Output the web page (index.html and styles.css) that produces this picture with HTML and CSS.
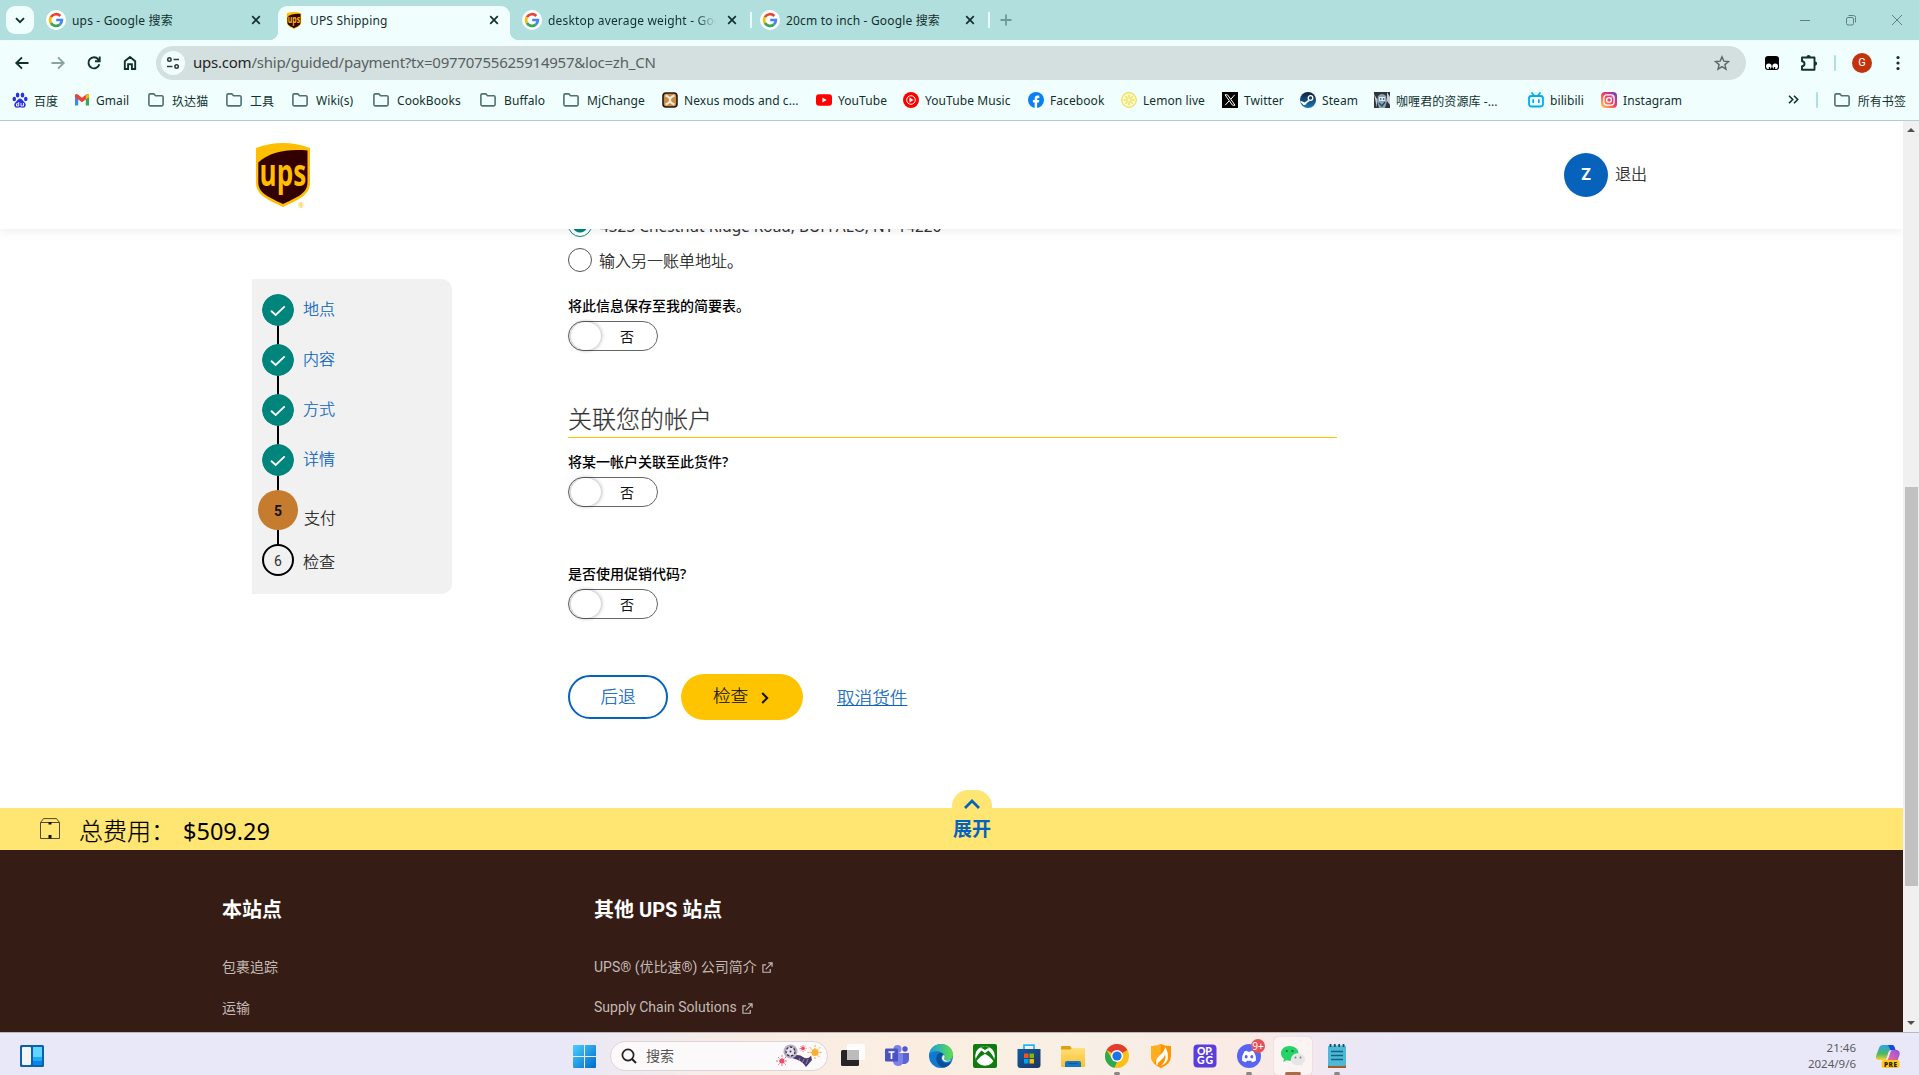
FILE: index.html
```html
<!DOCTYPE html>
<html lang="zh-CN">
<head>
<meta charset="utf-8">
<title>UPS Shipping</title>
<link rel="stylesheet" href="styles.css">
</head>
<body>
<svg class="defs" width="0" height="0" aria-hidden="true">
  <defs>
    <symbol id="google" viewBox="0 0 20 20">
      <circle cx="10" cy="10" r="10" fill="#fff"/>
      <g fill="none" stroke-width="2.7">
        <path d="M14.3 6A5.9 5.9 0 0 0 4.9 7.2" stroke="#ea4335"/>
        <path d="M4.9 7.2a5.9 5.9 0 0 0 0 5.8" stroke="#fbbc05"/>
        <path d="M4.9 13a5.9 5.9 0 0 0 9 1.4" stroke="#34a853"/>
        <path d="M13.9 14.4A5.9 5.9 0 0 0 15.9 10H10.2" stroke="#4285f4"/>
      </g>
    </symbol>
    <symbol id="close" viewBox="0 0 10 10"><path d="M1.2 1.2l7.6 7.6M8.8 1.2L1.2 8.8" stroke="currentColor" stroke-width="1.7"/></symbol>
    <symbol id="folder" viewBox="0 0 16 14"><path d="M.9 11.6V2.2q0-1.3 1.3-1.3h3.6l1.8 1.8h6.2q1.3 0 1.3 1.3v7.6q0 1.3-1.3 1.3H2.2q-1.3 0-1.3-1.3z" fill="none" stroke="#52706e" stroke-width="1.6"/></symbol>
    <symbol id="ups" viewBox="0 0 54 64">
      <path d="M0 5Q27-5 54 5v34c0 12-8 16-27 25C8 55 0 51 0 39z" fill="#ffbe00"/>
      <path d="M2.300 19.500C13 9 31 5.500 51.500 7.400V39c0 10-7 14-24.500 22C9.500 53 2.300 49 2.300 39z" fill="#330000"/>
      <text x="3.600" y="43" font-family="Open Sans, sans-serif" font-weight="700" font-size="38" textLength="46.500" lengthAdjust="spacingAndGlyphs" fill="#ffbe00">ups</text>
    </symbol>
    <symbol id="check" viewBox="0 0 32 32"><circle cx="16" cy="16" r="16" fill="#00857d"/><path d="M9 16.700l4.700 4.300 9-8.600" fill="none" stroke="#fff" stroke-width="1.900"/></symbol>
    <symbol id="external" viewBox="0 0 12 12"><path d="M4.500 3.200H1v8h8V7.500M4 8l6.700-6.700M6.800 1H11v4.200" fill="none" stroke="currentColor" stroke-width="1.300"/></symbol>
    <linearGradient id="insta" x1="0" y1="1" x2="1" y2="0"><stop offset="0" stop-color="#fd5"/><stop offset=".5" stop-color="#ff3a58"/><stop offset="1" stop-color="#6a38dd"/></linearGradient>
    <linearGradient id="win" x1="0" y1="0" x2="1" y2="1"><stop offset="0" stop-color="#4ad0fb"/><stop offset="1" stop-color="#0069cc"/></linearGradient>
    <linearGradient id="edge" x1="0" y1="0" x2="1" y2="0"><stop offset="0" stop-color="#1a9de0"/><stop offset="1" stop-color="#5fe04d"/></linearGradient>
    <linearGradient id="steam" x1="0" y1="0" x2="0" y2="1"><stop offset="0" stop-color="#111d3e"/><stop offset="1" stop-color="#1a78b5"/></linearGradient>
    <linearGradient id="store" x1="0" y1="0" x2="1" y2="1"><stop offset="0" stop-color="#0f5ba6"/><stop offset="1" stop-color="#20345c"/></linearGradient>
    <linearGradient id="files" x1="0" y1="0" x2="0" y2="1"><stop offset="0" stop-color="#ffe07a"/><stop offset="1" stop-color="#fbbf2b"/></linearGradient>
    <linearGradient id="cop" x1="0" y1="0" x2="0" y2="1"><stop offset="0" stop-color="#2aa2f5"/><stop offset=".6" stop-color="#52b85c"/><stop offset="1" stop-color="#f7d432"/></linearGradient>
    <linearGradient id="cop2" x1="1" y1="0" x2="0" y2="1"><stop offset="0" stop-color="#8c52f4"/><stop offset="1" stop-color="#ff6b7a"/></linearGradient>
  </defs>
</svg>

<div class="tabs">
  <button class="tab-search"><svg width="10" height="7" viewBox="0 0 10 7"><path d="M1 1.200l4 4 4-4" fill="none" stroke="#12302e" stroke-width="1.900"/></svg></button>
  <div class="tab"><svg class="fav"><use href="#google"/></svg><span class="title">ups - Google 搜索</span><svg class="x"><use href="#close"/></svg></div>
  <div class="tab active"><svg class="fav shield"><use href="#ups"/></svg><span class="title">UPS Shipping</span><svg class="x"><use href="#close"/></svg></div>
  <div class="tab divided"><svg class="fav"><use href="#google"/></svg><span class="title fade">desktop average weight - Goo</span><svg class="x"><use href="#close"/></svg></div>
  <div class="tab divided"><svg class="fav"><use href="#google"/></svg><span class="title">20cm to inch - Google 搜索</span><svg class="x"><use href="#close"/></svg></div>
  <svg class="plus" width="12" height="12" viewBox="0 0 12 12"><path d="M6 .5v11M.5 6h11" stroke="#6a9b99" stroke-width="1.800"/></svg>
  <div class="window-buttons">
    <svg width="12" height="12" viewBox="0 0 12 12"><path d="M1 6.500h10"/></svg>
    <svg width="12" height="12" viewBox="0 0 12 12"><path d="M3.500 1.500h5q2 0 2 2v5M1.500 5q0-1.500 1.500-1.500h4q1.500 0 1.500 1.500v4.500q0 1.500-1.500 1.500H3q-1.500 0-1.500-1.500z"/></svg>
    <svg width="12" height="12" viewBox="0 0 12 12"><path d="M1 1l10 10M11 1L1 11"/></svg>
  </div>
</div>

<div class="toolbar">
  <div class="nav">
    <svg width="16" height="16" viewBox="0 0 16 16"><path d="M14.500 8H3M8 2.300L2.300 8 8 13.700"/></svg>
    <svg class="off" width="16" height="16" viewBox="0 0 16 16"><path d="M1.500 8H13M8 2.300L13.700 8 8 13.700"/></svg>
    <svg width="16" height="16" viewBox="0 0 16 16"><path d="M13.300 9.200A5.500 5.500 0 1 1 12.200 4.300L13.500 5.800M13.700 1.500v4.700H9"/></svg>
    <svg width="16" height="16" viewBox="0 0 16 16"><path d="M2.800 14V6.300L8 2l5.200 4.300V14H9.900V9.300H6.100V14z"/></svg>
  </div>
  <div class="omnibox">
    <span class="site"><svg width="14" height="14" viewBox="0 0 14 14"><g fill="none" stroke="#333b3a" stroke-width="1.600"><circle cx="3.400" cy="3.500" r="1.700"/><path d="M7.500 3.500H13M1 10.500h5.500"/><circle cx="10.600" cy="10.500" r="1.700"/></g></svg></span>
    <span class="url"><b>ups.com</b>/ship/guided/payment?tx=09770755625914957&amp;loc=zh_CN</span>
    <svg width="16" height="16" viewBox="0 0 16 16"><path d="M8 1.800l1.800 4.300 4.700.4-3.600 3.100 1.100 4.600L8 11.700l-4 2.500 1.100-4.600L1.500 6.500l4.700-.4z" fill="none" stroke="#5c6665" stroke-width="1.400"/></svg>
  </div>
  <div class="actions">
    <svg width="16" height="16" viewBox="0 0 16 16"><rect x="1" y="1" width="14" height="14" rx="3" fill="#000"/><circle cx="4.800" cy="11.300" r="2.800" fill="#fff"/><circle cx="11.200" cy="11.300" r="2.800" fill="#fff"/><path d="M5.500 12v2M10.500 12v2" stroke="#000" stroke-width="1.300"/></svg>
    <svg width="18" height="18" viewBox="0 0 18 18"><path d="M2 3.500h12.500v12.300H2v-3.700q2.500 0 2.500-2.400T2 7.200z" fill="none" stroke="#12302e" stroke-width="1.900" stroke-linejoin="round"/><path d="M6.600 3a2 2 0 0 1 4 0zM15 7.500a2.100 2.100 0 0 1 0 4.200z" fill="#12302e"/></svg>
    <i class="sep"></i>
    <span class="avatar">G</span>
    <svg width="4" height="16" viewBox="0 0 4 16" fill="#12302e"><circle cx="2" cy="2.500" r="1.600"/><circle cx="2" cy="8" r="1.600"/><circle cx="2" cy="13.500" r="1.600"/></svg>
  </div>
</div>

<div class="bookmarks">
  <a><svg viewBox="0 0 16 16" fill="#2932e1"><ellipse cx="5.600" cy="3" rx="1.800" ry="2.500"/><ellipse cx="10.500" cy="3" rx="1.800" ry="2.500"/><ellipse cx="2.300" cy="7" rx="1.800" ry="2.300"/><ellipse cx="13.800" cy="7" rx="1.800" ry="2.300"/><path d="M8 6.500c2 0 3 2.600 4.600 4 2 1.800 1.200 5.200-1.500 5.200-1.200 0-2-.4-3.100-.4s-1.900.4-3.100.4c-2.700 0-3.500-3.400-1.500-5.200C5 9.100 6 6.500 8 6.500z"/><path d="M6.700 10v4H4.500v-2.200h2M9 11v3h2.500v-3" fill="none" stroke="#fff" stroke-width=".9"/></svg><span>百度</span></a>
  <a><svg viewBox="0 0 16 16"><path d="M1 13.500V4.500L4.200 6v7.500z" fill="#4285f4"/><path d="M11.800 13.500V6L15 4.500v9z" fill="#34a853"/><path d="M.9 5V3.500Q1.500 1.300 3.900 2.600L8 5.800l4.100-3.200q2.400-1.300 3 .9V5L8 10.200z" fill="#ea4335"/><path d="M11.800 7.400V3l1-.6q2.300-.6 2.300 1.800V5z" fill="#fbbc04"/></svg><span>Gmail</span></a>
  <a class="dir"><svg><use href="#folder"/></svg><span>玖达猫</span></a>
  <a class="dir"><svg><use href="#folder"/></svg><span>工具</span></a>
  <a class="dir"><svg><use href="#folder"/></svg><span>Wiki(s)</span></a>
  <a class="dir"><svg><use href="#folder"/></svg><span>CookBooks</span></a>
  <a class="dir"><svg><use href="#folder"/></svg><span>Buffalo</span></a>
  <a class="dir"><svg><use href="#folder"/></svg><span>MjChange</span></a>
  <a><svg viewBox="0 0 16 16"><rect x="1" y="1" width="14" height="14" rx="3" fill="#c98b48" stroke="#221a12" stroke-width="1.600"/><path d="M3.500 3.500Q8 5 8 8t4.500 4.500M12.500 3.500Q8 5 8 8t-4.500 4.500" stroke="#f7ead6" stroke-width="2" fill="none"/></svg><span>Nexus mods and c...</span></a>
  <a><svg viewBox="0 0 16 16"><rect y="2.300" width="16" height="11.400" rx="3" fill="#f00"/><path d="M6.400 5.500v5L10.700 8z" fill="#fff"/></svg><span>YouTube</span></a>
  <a><svg viewBox="0 0 16 16"><circle cx="8" cy="8" r="8" fill="#f00"/><circle cx="8" cy="8" r="4.300" fill="none" stroke="#fff"/><path d="M6.500 5.600v4.800L10.500 8z" fill="#fff"/></svg><span>YouTube Music</span></a>
  <a><svg viewBox="0 0 16 16"><circle cx="8" cy="8" r="8" fill="#0c80f2"/><path d="M6.700 16v-5.500H4.900V8h1.800V6.500q0-3 3-3 1 0 1.600.2V6h-1q-1.200 0-1.200 1.200V8h2.200l-.4 2.500H9.100V16z" fill="#fff"/></svg><span>Facebook</span></a>
  <a><svg viewBox="0 0 16 16"><circle cx="8" cy="8" r="7.300" fill="#fffbd0" stroke="#ecdf52" stroke-width="1.200"/><path d="M8 2.500v11M2.500 8h11M4.100 4.100l7.800 7.800M11.900 4.100l-7.800 7.800" stroke="#eee060" stroke-width="1.400" stroke-dasharray="4 3"/></svg><span>Lemon live</span></a>
  <a><svg viewBox="0 0 16 16"><rect width="16" height="16" fill="#000"/><path d="M3 2.800h2.500l7.500 10.400h-2.500zM12.700 2.800L9 7.100M7 9l-3.800 4.200" fill="none" stroke="#fff" stroke-width="1"/></svg><span>Twitter</span></a>
  <a><svg viewBox="0 0 16 16"><circle cx="8" cy="8" r="8" fill="url(#steam)"/><circle cx="10.500" cy="6" r="2.300" fill="none" stroke="#fff" stroke-width="1.300"/><path d="M.4 8.800l4.400 1.800 3.600-2.900 1.200 1.200-3 2.300a2.200 2.200 0 0 1-4.200.6L.7 10.500z" fill="#fff"/></svg><span>Steam</span></a>
  <a><svg viewBox="0 0 16 16"><rect width="16" height="16" fill="#30343b"/><path d="M4 4q4-4 8 0l1 5-2 7H5L3 9z" fill="#8aa4b8"/><path d="M5 5h6v4H5z" fill="#dde6ea"/><path d="M0 2l3 5v9M13 0l3 5v8l-3-4z" fill="#c9cbd0"/><path d="M6 7h1.300M9 7h1.300M5 11l3 3 3-4" stroke="#2c4358" fill="none" stroke-width="1.300"/></svg><span>咖喱君的资源库 -...</span></a>
  <a><svg viewBox="0 0 16 16" fill="none" stroke="#00aeec" stroke-width="1.800"><rect x="1" y="4" width="14" height="10.500" rx="2.400"/><path d="M4 1l2 2.500M12 1l-2 2.500M5.200 8v2.200M10.800 8v2.200" stroke-linecap="round"/></svg><span>bilibili</span></a>
  <a><svg viewBox="0 0 16 16"><rect width="16" height="16" rx="4" fill="url(#insta)"/><g fill="none" stroke="#fff" stroke-width="1.300"><rect x="2.900" y="2.900" width="10.200" height="10.200" rx="3"/><circle cx="8" cy="8" r="2.400"/></g><circle cx="11" cy="5" r=".7" fill="#fff"/></svg><span>Instagram</span></a>
  <div class="overflow">
    <svg width="11" height="9" viewBox="0 0 11 9"><path d="M1 .8l3.700 3.700L1 8.200M6 .8l3.700 3.700L6 8.200" fill="none" stroke="#12302e" stroke-width="1.600"/></svg>
    <i class="sep"></i>
    <a class="dir"><svg><use href="#folder"/></svg><span>所有书签</span></a>
  </div>
</div>

<div class="window">
  <div class="page">
    <header>
      <div class="logo"><svg width="54" height="64"><use href="#ups"/></svg><sup>®</sup></div>
      <div class="user"><span class="initial">Z</span><span class="logout">退出</span></div>
    </header>
    <main>
      <aside>
        <ol>
          <li class="done"><svg class="dot"><use href="#check"/></svg><a>地点</a></li>
          <li class="done"><svg class="dot"><use href="#check"/></svg><a>内容</a></li>
          <li class="done"><svg class="dot"><use href="#check"/></svg><a>方式</a></li>
          <li class="done"><svg class="dot"><use href="#check"/></svg><a>详情</a></li>
          <li class="current"><span class="dot">5</span><span class="name">支付</span></li>
          <li class="next"><span class="dot">6</span><span class="name">检查</span></li>
        </ol>
      </aside>
      <form>
        <label class="radio on"><i></i><span>4323 Chestnut Ridge Road, BUFFALO, NY 14226</span></label>
        <label class="radio"><i></i><span>输入另一账单地址。</span></label>
        <div class="question save"><p>将此信息保存至我的简要表。</p><div class="toggle"><i></i><span>否</span></div></div>
        <h2>关联您的帐户</h2>
        <div class="question"><p>将某一帐户关联至此货件?</p><div class="toggle"><i></i><span>否</span></div></div>
        <div class="question promo"><p>是否使用促销代码?</p><div class="toggle"><i></i><span>否</span></div></div>
        <div class="buttons">
          <span class="back">后退</span>
          <span class="go">检查<svg width="8" height="12" viewBox="0 0 8 12"><path d="M1.200 1l5 5-5 5" fill="none" stroke="#121212" stroke-width="2"/></svg></span>
          <a>取消货件</a>
        </div>
      </form>
    </main>
    <div class="total">
      <svg width="20" height="21" viewBox="0 0 20 21"><path d="M.5 4.500h19v16H.5zM.5 4.500L3.500.6h13l3 3.900" fill="none" stroke="#54492a" stroke-width="1"/><path d="M8.500 4h3v2.500h-3zM8.500 17h3v3.500h-3z" fill="#121212"/></svg>
      <span class="cost">总费用：</span><span class="amount">$509.29</span>
      <div class="expand"><svg width="18" height="10" viewBox="0 0 18 10"><path d="M2 9l7-7 7 7" fill="none" stroke="#0662bb" stroke-width="2.700"/></svg><b>展开</b></div>
    </div>
    <footer>
      <section><h3>本站点</h3><a>包裹追踪</a><a>运输</a></section>
      <section><h3>其他 UPS 站点</h3><a>UPS® (优比速®) 公司简介 <svg><use href="#external"/></svg></a><a>Supply Chain Solutions <svg><use href="#external"/></svg></a></section>
    </footer>
  </div>
  <div class="scrollbar"><i class="up"></i><i class="thumb"></i><i class="down"></i></div>
</div>

<div class="taskbar">
  <svg class="widgets" width="24" height="22" viewBox="0 0 24 22"><rect width="24" height="22" rx="1.500" fill="#0e5fae"/><rect x="2" y="2" width="9" height="18" rx="1" fill="#f4f4f4"/><path d="M13 2h9v10h-9z" fill="#62d5ff"/><path d="M13 12h9v4h-9z" fill="#1eaaf5"/><path d="M13 16h9v4h-9z" fill="#0a84e6"/></svg>
  <svg class="start" width="23" height="23" viewBox="0 0 23 23" fill="url(#win)"><path d="M0 1q0-1 1-1h10v11H0zM12 0h10q1 0 1 1v10H12zM0 12h11v11H1q-1 0-1-1zM12 12h11v10q0 1-1 1H12z"/></svg>
  <div class="search">
    <svg width="16" height="16" viewBox="0 0 16 16"><circle cx="7" cy="7" r="5.600" fill="none" stroke="#222" stroke-width="1.700"/><path d="M11 11l4 4" stroke="#222" stroke-width="2"/></svg>
    <span>搜索</span>
    <svg class="party" width="48" height="24" viewBox="0 0 48 24"><g stroke="#f6a623" stroke-dasharray="2 1"><path d="M40 1v15M32.500 8.500h15M34.700 3.200l10.600 10.600M45.300 3.200L34.700 13.800"/></g><circle cx="40" cy="8.500" r="3.500" fill="#fdae2f"/><g stroke="#ee4b6a" stroke-width=".8" stroke-dasharray="2 1"><path d="M7 11v12M1 17h12M3 13l8 8M11 13l-8 8M28 1v7M24.500 4.500h7M25.500 2l5 5M30.500 2l-5 5"/></g><circle cx="7" cy="17" r="2.600" fill="#ee4b6a"/><circle cx="28" cy="4.500" r="1.800" fill="#ee4b6a"/><path d="M17 13q6-4 11 0 4 3 8-1l1 4-6 7q-3-5-8-7-3-1-6-2z" fill="#4b3a6c"/><path d="M25 14l-1 3M29 15l-2 4M33 15l-2 5" stroke="#9384b3"/><circle cx="15.500" cy="7.500" r="7" fill="#b8b0c4"/><circle cx="15.500" cy="7.500" r="4.500" fill="#e6e0ec" stroke="#3a304c" stroke-width="1.300" stroke-dasharray="2.500 1.500"/><circle cx="15.500" cy="7.500" r="1" fill="#44385a"/></svg>
  </div>
  <div class="apps">
    <span><svg viewBox="0 0 24 24"><rect y="6" width="18" height="16" rx="1.500" fill="#252525"/><rect x="6" y="0" width="18" height="16" rx="1.500" fill="#fff" opacity=".92"/><path d="M6 6h12v10H6z" fill="#bcbcbc"/></svg></span>
    <span><svg viewBox="0 0 24 24"><circle cx="12.500" cy="5" r="4" fill="#7b83eb"/><circle cx="20" cy="5" r="2.700" fill="#5059c9"/><path d="M17 9h7v6q0 4-4 5h-3z" fill="#5b63d0"/><path d="M8 9h10v8q0 5-5 5-5-.5-5-5z" fill="#7b83eb"/><rect y="4.500" width="13" height="13" rx="1.300" fill="#4b53bc"/><path d="M3.500 8h6M6.500 8v7" stroke="#fff" stroke-width="1.700"/></svg></span>
    <span><svg viewBox="0 0 24 24"><circle cx="12" cy="12" r="12" fill="#0f79cf"/><path d="M.2 10C1.500 4 6 0 12 0c7 0 12 5 12 10.500 0 4-3 6-6 6-3.500 0-3.500-1.500-2.700-2.600C16 8.500 10 6.500 5.500 7.500 2.500 8.200.8 9 .2 10z" fill="url(#edge)"/><path d="M10 9c-5 4-3 13 5 14.600 4-1 6-3 7.500-5.600-5 2.500-10 1-10.500-3.500-.2-2 1-3.500 2.500-4Q12.500 8 10 9z" fill="#0b4f9c"/><path d="M15.300 13.900q-1 1 .2 1.800 3.500 2 7.500-.2-4 3.500-8 1.700-3.500-2.200-1-6.200 2.300.9 1.300 2.900z" fill="#f6f0ea"/></svg></span>
    <span><svg viewBox="0 0 24 24"><rect width="24" height="24" rx="2" fill="#107c10"/><circle cx="12" cy="12" r="9.800" fill="#fff"/><path d="M6.500 4.200Q9 3.700 12 6q3-2.300 5.500-1.800L12 2zM8.600 6.600L12 9.300l3.400-2.700c4.300 4 7 9 5.300 11C19 14.500 14.600 11.200 12 10c-2.600 1.200-7 4.500-8.700 7.600-1.700-2 1-7 5.300-11z" fill="#107c10"/></svg></span>
    <span><svg viewBox="0 0 24 24"><path d="M7 6V1.200h10V6" fill="none" stroke="#28b7f5" stroke-width="1.800"/><path d="M.5 5h23v16q0 3-3 3h-17q-3 0-3-3z" fill="url(#store)"/><path d="M7 9.500h4.500V14H7z" fill="#f25022"/><path d="M12.500 9.500H17V14h-4.500z" fill="#7fba00"/><path d="M7 15h4.500v4.500H7z" fill="#00a4ef"/><path d="M12.500 15H17v4.500h-4.500z" fill="#ffb900"/></svg></span>
    <span><svg viewBox="0 0 24 24"><path d="M0 3q0-1 1-1h8l2 2.500V8H0z" fill="#dca013"/><path d="M0 5.500h9L11.500 4H23q1 0 1 1v17q0 1-1 1H1q-1 0-1-1z" fill="url(#files)"/><path d="M4 23v-4q0-2 2-2h12q2 0 2 2v4z" fill="#1275c7"/><path d="M7.500 19.500h9" stroke="#0b5798"/></svg></span>
    <span class="running"><svg viewBox="0 0 24 24"><circle cx="12" cy="12" r="12" fill="#fbc116"/><path d="M12 12L1.600 6A12 12 0 0 1 22.400 6z" fill="#e33b2e"/><path d="M1.600 6L7 15l5 3-2.500 5.800A12 12 0 0 1 1.600 6z" fill="#2da94f"/><circle cx="12" cy="12" r="6" fill="#fff"/><circle cx="12" cy="12" r="4.600" fill="#1a73e8"/></svg></span>
    <span><svg viewBox="0 0 24 24"><path d="M2 2q6 .5 10-2 4 2.500 10 2v10q0 8-10 12Q2 20 2 12z" fill="#ff9500"/><path d="M2 2q6 .5 10-2v8L5 19q-3-3-3-7z" fill="#ffae20"/><path d="M16 3q0 4-5 8-6 5-3 11 0-3 3-5 5-4 5-7 2 6-4 12 7-3 7-9 0-6-3-10z" fill="#fff"/></svg></span>
    <span><svg viewBox="0 0 24 24"><rect x=".5" y=".5" width="23" height="23" rx="4" fill="#5b3ddb"/><g fill="#fff" font-family="Lato, sans-serif" font-weight="900" font-size="10.500"><text x="4" y="11.200" textLength="16">OP.</text><text x="4" y="20" textLength="16">GG</text></g></svg></span>
    <span class="running"><svg viewBox="0 0 24 24"><circle cx="12" cy="12" r="12" fill="#5865f2"/><path d="M7.500 7.300l2.600-.6.700 1h2.400l.7-1 2.600.6q3 4.500 2.500 9.200-2 1.500-4 1.700l-.8-1.500H9.800L9 18.200q-2-.2-4-1.700-.5-4.700 2.500-9.200z" fill="#fff"/><ellipse cx="9.200" cy="12.700" rx="1.500" ry="1.800" fill="#5865f2"/><ellipse cx="14.800" cy="12.700" rx="1.500" ry="1.800" fill="#5865f2"/></svg><em>9+</em></span>
    <span class="focused"><svg viewBox="0 0 24 24"><path d="M8.500 2C3.500 2 0 5.200 0 9.300c0 2.400 1.200 4.200 3 5.500L2.300 18l3.200-1.700q1.500.4 3 .4c5 0 9-3.100 9-7.400S13.500 2 8.500 2z" fill="#25d366"/><circle cx="5.700" cy="7" r="1.100" fill="#0b7538"/><circle cx="11.500" cy="7" r="1.100" fill="#0b7538"/><path d="M17 9.200c-4 0-7 2.700-7 6s3 6 7 6q1.300 0 2.500-.3L22 22l-.5-2.500q2.500-1.700 2.500-4.300c0-3.300-3-6-7-6z" fill="#e6e6e6"/><circle cx="14.500" cy="13.500" r=".9" fill="#777"/><circle cx="19.500" cy="13.500" r=".9" fill="#777"/></svg></span>
    <span class="running"><svg viewBox="0 0 24 24"><path d="M3 21h18v3H3z" fill="#a65a22"/><rect x="3" y="1.500" width="18" height="20.500" rx="1.500" fill="#4db8d8"/><path d="M5.500 0v3M9.800 0v3M14.200 0v3M18.500 0v3" stroke="#16506a" stroke-width="1.800"/><path d="M6 7.500h12M6 11.500h12M6 15.500h12" stroke="#12647f" stroke-width="1.600"/></svg></span>
  </div>
  <div class="clock">21:46<br>2024/9/6</div>
  <svg class="copilot" width="24" height="23" viewBox="0 0 24 23"><path d="M7 0h9q2 0 2.500 2l1 3h-4q-2.500 0-3.300 3L10 15H3q-4 0-3-4L3 3q1-3 4-3z" fill="url(#cop)"/><path d="M12 0h4q2 0 2.500 2l1 3h-5z" fill="#174ad6"/><path d="M16 5h5q3.500 1 2.500 5l-2 6H10q2-1 2.500-3l2-6q.5-2 1.500-2z" fill="url(#cop2)"/><rect x="5.500" y="15" width="18" height="8" rx="2.500" fill="#ffc91c"/><text x="8" y="21.500" font-family="Open Sans, sans-serif" font-weight="800" font-size="6.500" textLength="13" fill="#2a2104">PRE</text></svg>
</div>
</body>
</html>
```
FILE: styles.css
```css
* { box-sizing: border-box; }
body {
  margin: 0; width: 1919px; height: 1075px; overflow: hidden;
  display: flex; flex-direction: column;
  font-family: "Noto Sans", "Noto Sans CJK SC", sans-serif; color: #121212; background: #fff;
}
svg { flex: none; display: block; }
.defs { position: absolute; }
h2, h3, p, ol { margin: 0; padding: 0; font-weight: inherit; }
button { border: 0; padding: 0; }

/* tab strip */
.tabs { height: 40px; flex: none; display: flex; align-items: center; background: #b1dfdd; padding-left: 6px; }
.tab-search { width: 28px; height: 28px; border-radius: 9px; background: #f0fffe; display: flex; align-items: center; justify-content: center; margin-right: 6px; }
.tab { position: relative; width: 232px; margin-right: 6px; height: 34px; margin-top: 6px; padding: 0 11px 6px 6px; display: flex; align-items: center; font-size: 12px; color: #12302e; }
.tab .fav { width: 20px; height: 20px; margin-right: 6px; }
.tab .fav.shield { height: 17px; }
.tab .title { flex: 1; white-space: nowrap; overflow: hidden; letter-spacing: .17px; }
.tab .fade { -webkit-mask-image: linear-gradient(90deg, #000 148px, transparent 168px); }
.tab .x { width: 10px; height: 10px; margin-left: 10px; }
.tab.active { background: #f0fffe; border-radius: 9px 9px 0 0; }
.tab.active::before, .tab.active::after { content: ""; position: absolute; bottom: 0; width: 9px; height: 9px; }
.tab.active::before { left: -9px; background: radial-gradient(circle at 0 0, transparent 9px, #f0fffe 9.500px); }
.tab.active::after { right: -9px; background: radial-gradient(circle at 100% 0, transparent 9px, #f0fffe 9.500px); }
.tab.divided::after { content: ""; position: absolute; right: -4px; top: 6px; width: 2px; height: 16px; background: #e8fbfa; }
.plus { margin-left: 8px; }
.window-buttons { margin-left: auto; display: flex; gap: 34px; padding-right: 16px; }
.window-buttons path { fill: none; stroke: #5f8280; }

/* toolbar */
.toolbar { height: 46px; flex: none; display: flex; align-items: center; background: #f0fffe; padding-left: 14px; }
.nav { display: flex; gap: 20px; width: 142px; }
.nav path { fill: none; stroke: #12302e; stroke-width: 1.900; }
.nav .off path { stroke: #8aa3a1; }
.omnibox { width: 1590px; height: 34px; border-radius: 17px; background: #d4e0df; display: flex; align-items: center; padding: 0 16px 0 5px; }
.site { width: 24px; height: 24px; border-radius: 12px; background: #f0fffe; display: flex; align-items: center; justify-content: center; }
.url { flex: 1; margin: -2px 0 0 8px; font-size: 15px; letter-spacing: -.23px; color: #58605f; }
.url b { font-weight: 400; color: #1f2625; }
.actions { display: flex; align-items: center; padding-left: 18px; flex: 1; }
.sep { width: 2px; height: 16px; background: #b1dfdd; border-radius: 1px; }
.actions svg:nth-child(2) { margin: 0 16px 0 20px; }
.avatar { width: 20px; height: 20px; border-radius: 10px; background: #c2330d; color: #fff; font: 11px/20px Roboto, sans-serif; text-align: center; margin: 0 24px 0 16px; }

/* bookmarks */
.bookmarks { height: 35px; flex: none; background: #f0fffe; border-bottom: 1px solid #b4cccb; padding: 0 13px 7px 12px; display: grid; align-items: center;
  grid-template-columns: 62px 74px 78px 66px 81px 107px 83px 99px 154px 87px 125px 93px 101px 78px 74px 154px 73px 100px 1fr; }
.bookmarks a { display: flex; align-items: center; gap: 6px; font-size: 12px; color: #12302e; white-space: nowrap; letter-spacing: .08px; }
.bookmarks a span { padding-top: 2px; }
.bookmarks a svg { width: 16px; height: 16px; }
.bookmarks a.dir { gap: 8px; }
.bookmarks a.dir svg { height: 14px; }
.overflow { display: flex; align-items: center; justify-content: flex-end; }
.overflow .sep { margin: 0 16px 0 17px; }

/* page */
.window { height: 911px; flex: none; display: flex; }
.page { width: 1903px; display: flex; flex-direction: column; overflow: hidden; }
header { height: 108px; flex: none; z-index: 2; background: #fff; box-shadow: 0 2px 10px rgba(0,0,0,.08); display: flex; justify-content: space-between; padding: 0 256px; }
.logo { display: flex; margin-top: 22px; height: 66px; align-items: flex-end; }
.logo svg { align-self: flex-start; }
.logo sup { font-size: 7px; line-height: 7px; color: #ffbe00; margin-left: -12px; }
.user { display: flex; align-items: center; gap: 7px; font-size: 16px; font-weight: 300; }
.logout { margin-top: -5px; -webkit-text-stroke: .2px; }
.initial { width: 44px; height: 44px; border-radius: 22px; background: #0662bb; color: #fff; font: 700 16px/44px Roboto, sans-serif; text-align: center; }
main { height: 579px; flex: none; display: flex; align-items: flex-start; overflow: hidden; padding-left: 252px; font-weight: 300; }
aside { margin-top: 50px; width: 200px; height: 315px; background: #f1f1f1; border-radius: 0 10px 10px 0; padding: 6px 0 0 6px; }
ol { list-style: none; background: linear-gradient(#000, #000) 19px 25px / 2px 250px no-repeat; }
li { height: 50px; display: flex; align-items: center; font-size: 16px; -webkit-text-stroke: .2px; }
li a { color: #0662bb; margin-top: -5px; }
.dot { width: 32px; height: 32px; border-radius: 50%; margin: 0 9px 0 4px; text-align: center; font: 400 14px/30px Roboto, sans-serif; -webkit-text-stroke: 0; }
.next .dot { border: 2px solid #000; background: #f1f1f1; color: #333; }
.next .name { margin-top: 1px; }
.current .dot { width: 40px; height: 40px; margin: 0 6px 0 0; background: #c67c2f; font-weight: 700; line-height: 42px; }
.current .name { margin-top: 13px; }
form { margin: -16px 0 0 116px; width: 769px; }
.radio { display: flex; align-items: center; height: 24px; margin-bottom: 11px; font-size: 16px; -webkit-text-stroke: .2px; }
.radio i { width: 24px; height: 24px; border: 1px solid #555; border-radius: 50%; margin-right: 7px; }
.radio.on i { border-color: #00857d; background: radial-gradient(circle, #00857d 7px, transparent 8px); }
.radio.on span { margin: 3px 0 0 1px; white-space: nowrap; font-weight: 400; color: #333; font-size: 15.400px; -webkit-text-stroke: 0; }
.question p { font-size: 14px; line-height: 20px; font-weight: 500; color: #000; }
.question .toggle { margin-top: 5px; }
.save { margin-top: 24px; }
.toggle { width: 90px; height: 30px; border: 1px solid #666; border-radius: 15px; display: flex; align-items: center; padding-left: 2px; font-size: 14px; font-weight: 400; }
.toggle span { margin-top: -1px; }
.toggle i { width: 30px; height: 28px; border-radius: 50%; background: #fff; box-shadow: 0 0 4px rgba(0,0,0,.4); margin-right: 19px; }
h2 { margin-top: 50px; height: 37px; border-bottom: 1px solid #ffc400; font-size: 24px; line-height: 36px; color: #333; margin-bottom: 14px; -webkit-text-stroke: .2px; }
.promo { margin-top: 57px; }
.buttons { display: flex; align-items: center; height: 46px; margin-top: 55px; font-size: 17.600px; -webkit-text-stroke: .2px; }
.back { width: 100px; height: 44px; border: 2px solid #0662bb; border-radius: 22px; color: #0662bb; text-align: center; line-height: 38px; margin-right: 13px; }
.go { width: 122px; height: 46px; border-radius: 23px; background: #ffc400; display: flex; align-items: center; padding-left: 32px; padding-bottom: 5px; margin-right: 34px; }
.go svg { margin: 6px 0 0 13px; }
.buttons a { color: #0662bb; text-decoration: underline; margin-top: -2px; }
.total { position: relative; height: 42px; flex: none; background: #ffe572; display: flex; align-items: center; padding: 3px 0 0 40px; font-size: 24px; font-weight: 300; color: #000; }
.total > svg { margin: -4px 19px 0 0; }
.amount { font-weight: 400; font-size: 23.500px; }
.total .cost { width: 104px; white-space: nowrap; -webkit-text-stroke: .2px; margin-top: -2px; }
.expand { position: absolute; left: 952px; top: -18px; width: 40px; height: 52px; border-radius: 16px 16px 0 0; background: #ffe572; display: flex; flex-direction: column; align-items: center; padding-top: 9px; font-size: 19px; line-height: 20px; color: #0662bb; }
.expand b { margin-top: 10px; white-space: nowrap; font-weight: 700; }
footer { flex: 1; background: #351c15; padding: 45px 0 0 222px; display: flex; font-family: Roboto, "Noto Sans CJK SC", sans-serif; }
section { width: 372px; color: #c3bab6; }
h3 { font-size: 20px; line-height: 30px; font-weight: 700; color: #fff; margin-bottom: 31px; }
footer a { display: flex; align-items: center; gap: 5px; height: 20px; font-size: 14px; margin-bottom: 21px; white-space: nowrap; }
footer a svg { width: 11px; height: 11px; margin-top: 2px; }
.scrollbar { width: 16px; background: #f0f0f0; display: flex; flex-direction: column; align-items: center; padding: 7px 0; }
.scrollbar .up, .scrollbar .down { border: 4px solid transparent; border-top: 0; border-bottom: 4px solid #505050; }
.scrollbar .down { border-bottom: 0; border-top: 4px solid #505050; margin-top: auto; }
.thumb { width: 13px; height: 399px; background: #c1c1c1; margin-top: 355px; }

/* taskbar */
.taskbar { height: 43px; flex: none; border-top: 1px solid #bab7bd; display: flex; align-items: center; padding: 4px 19px 0 20px;
  background: linear-gradient(90deg, #e9e8f8 0, #e9e8f8 560px, #f8ece6 720px, #fbeee0 930px, #f7efe6 1100px, #faeae4 1250px, #ede7f5 1340px, #e9e8f8 1420px); }
.start { margin-left: 529px; }
.search { width: 218px; height: 30px; margin: 0 3px 0 14px; border-radius: 15px; background: #fcf9fa; border: 1px solid #dcd5da; display: flex; align-items: center; padding: 0 4px 0 10px; font-size: 14px; color: #555; }
.search span { margin: -2px 0 0 9px; flex: 1; }
.apps { display: flex; align-items: center; }
.apps span { position: relative; width: 44px; height: 38px; display: flex; align-items: center; justify-content: center; }
.apps svg { width: 24px; height: 24px; }
.apps .running::after, .apps .focused::after { content: ""; position: absolute; left: 19px; bottom: 0; width: 6px; height: 3px; border-radius: 2px; background: #8a8586; }
.apps .focused { width: 38px; margin: 0 3px; background: #fcf3f3; border-radius: 4px; box-shadow: 0 0 1px rgba(0,0,0,.3); }
.apps .focused::after { left: 11px; width: 16px; background: #a86c4b; }
.apps em { position: absolute; right: 6px; top: 2px; width: 14px; height: 14px; border-radius: 7px; background: #e5525a; color: #fff; font: 10px/14px "Noto Sans", sans-serif; text-align: center; }
.clock { margin-left: auto; text-align: right; font-size: 11.500px; line-height: 16px; color: #5c5a60; margin-right: 20px; }
```
